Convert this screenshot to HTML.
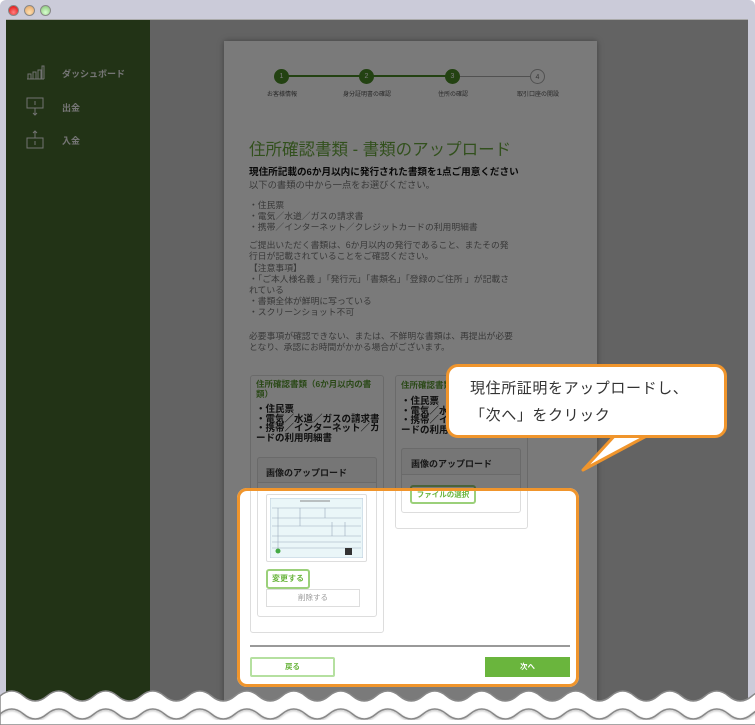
<!DOCTYPE html>
<html><head><meta charset="utf-8">
<style>
*{margin:0;padding:0;box-sizing:border-box}
body{width:755px;height:725px;overflow:hidden;background:#fff;font-family:"Liberation Sans","Noto Sans CJK JP",sans-serif;position:relative}
.frame{position:absolute;left:0;top:0;width:755px;height:725px;background:#cbcbd9;border-radius:6px 6px 0 0}
.dot{position:absolute;top:5px;width:11px;height:11px;border-radius:50%;border:1px solid #888}
.content{position:absolute;left:6px;top:19px;width:742px;height:690px;overflow:hidden;background:#cfcfcf;border-top:1px solid #aaa}
.side{position:absolute;left:0;top:0;width:144px;height:100%;background:#476c2e}
.side .t{position:absolute;left:56px;color:#f4f4f4;font-size:9px;font-weight:bold}
.card{position:absolute;left:218px;top:21px;width:373px;height:700px;background:#fff;box-shadow:0 0 6px rgba(0,0,0,.35)}
.a{position:absolute}
.step{position:absolute;top:28px;width:15px;height:15px;border-radius:50%;background:#4a8a26;color:#fff;font-size:7px;text-align:center;line-height:15px}
.sl{position:absolute;top:48px;font-size:6px;color:#555;width:80px;text-align:center}
.txt{font-size:8.8px;color:#777;line-height:11px}
.spot{position:absolute;left:231px;top:468px;width:342px;height:199px;border:3px solid #f0952c;border-radius:10px;box-shadow:0 0 0 1500px rgba(0,0,0,.52)}
</style></head><body>
<div class="frame">
<div class="dot" style="left:8px;background:radial-gradient(circle at 50% 70%,#ff8080,#d00)"></div>
<div class="dot" style="left:24px;background:radial-gradient(circle at 50% 70%,#ffe0b0,#e0a060)"></div>
<div class="dot" style="left:40px;background:radial-gradient(circle at 50% 70%,#d8ffd0,#80c070)"></div>
</div>
<div class="content">
 <div class="side">
  <svg class="a" style="left:20px;top:44px" width="20" height="16" viewBox="0 0 20 16" fill="none" stroke="#f0f0f0" stroke-width="1"><path d="M1 15h17M2 15v-5h3v5M7 15v-7h3v7M12 15v-9h3v9M16 15V2h2v13"/></svg>
  <div class="t" style="top:47px">ダッシュボード</div>
  <svg class="a" style="left:20px;top:77px" width="20" height="20" viewBox="0 0 20 20" fill="none" stroke="#f0f0f0" stroke-width="1"><rect x="1" y="1" width="16" height="10"/><path d="M9 11v7M7 16l2 2 2-2M9 4v4"/></svg>
  <div class="t" style="top:81px">出金</div>
  <svg class="a" style="left:20px;top:110px" width="20" height="20" viewBox="0 0 20 20" fill="none" stroke="#f0f0f0" stroke-width="1"><rect x="1" y="8" width="16" height="10"/><path d="M9 8V1M7 3l2-2 2 2M9 11v4"/></svg>
  <div class="t" style="top:114px">入金</div>
 </div>
 <div class="card">
  <div class="a" style="left:58px;top:34px;width:170px;height:2px;background:#4a8a26"></div>
  <div class="a" style="left:228px;top:35px;width:86px;height:1px;background:#aaa"></div>
  <div class="step" style="left:50px">1</div>
  <div class="step" style="left:135px">2</div>
  <div class="step" style="left:221px">3</div>
  <div class="step" style="left:306px;background:#fff;border:1px solid #aaa;color:#777">4</div>
  <div class="sl" style="left:18px">お客様情報</div>
  <div class="sl" style="left:103px">身分証明書の確認</div>
  <div class="sl" style="left:189px">住所の確認</div>
  <div class="sl" style="left:274px">取引口座の開設</div>
  <div class="a" style="left:25px;top:95px;font-size:16.5px;color:#6aa83e">住所確認書類 - 書類のアップロード</div>
  <div class="a" style="left:25px;top:123px;font-size:9.6px;font-weight:bold;color:#111">現住所記載の6か月以内に発行された書類を1点ご用意ください</div>
  <div class="a txt" style="left:25px;top:139px;font-size:9.3px">以下の書類の中から一点をお選びください。</div>
  <div class="a txt" style="left:25px;top:159px">・住民票<br>・電気／水道／ガスの請求書<br>・携帯／インターネット／クレジットカードの利用明細書</div>
  <div class="a txt" style="left:25px;top:199px;width:268px">ご提出いただく書類は、6か月以内の発行であること、またその発行日が記載されていることをご確認ください。</div>
  <div class="a txt" style="left:25px;top:222px;width:268px">【注意事項】<br>・「ご本人様名義 」「発行元」「書類名」「登録のご住所 」が記載されている<br>・書類全体が鮮明に写っている<br>・スクリーンショット不可</div>
  <div class="a txt" style="left:25px;top:290px;width:268px">必要事項が確認できない、または、不鮮明な書類は、再提出が必要となり、承認にお時間がかかる場合がございます。</div>
  <!-- left subcard -->
  <div class="a" style="left:26px;top:334px;width:134px;height:258px;border:1px solid #ddd;border-radius:3px"></div>
  <div class="a" style="left:32px;top:338px;width:124px;font-size:8.5px;font-weight:bold;color:#5b9a32;line-height:10px">住所確認書類（6か月以内の書類）</div>
  <div class="a" style="left:32px;top:364px;width:124px;font-size:9.5px;font-weight:bold;color:#222;line-height:9.5px">・住民票<br>・電気／水道／ガスの請求書<br>・携帯／インターネット／カードの利用明細書</div>
  <div class="a" style="left:33px;top:416px;width:120px;height:160px;border:1px solid #ddd;border-radius:3px"></div>
  <div class="a" style="left:33px;top:416px;width:120px;height:26px;background:#f6f6f6;border:1px solid #ddd;border-radius:3px 3px 0 0"></div>
  <div class="a" style="left:42px;top:425px;font-size:9px;font-weight:bold;color:#333">画像のアップロード</div>
  <div class="a" style="left:42px;top:453px;width:101px;height:68px;border:1px solid #ddd;border-radius:2px;padding:3px">
   <svg width="93" height="60" viewBox="0 0 93 60"><rect x="0" y="0" width="93" height="60" fill="#eaf6f8" stroke="#bcd"/><g stroke="#9ab" stroke-width=".6" fill="none"><path d="M2 10h89M2 20h89M2 28h89M2 38h89M2 44h89M2 50h89M30 10v18M55 10v10M62 24v14M75 24v14M8 10v40"/></g><rect x="75" y="50" width="7" height="7" fill="#333"/><circle cx="8" cy="53" r="2.5" fill="#4a4"/><path d="M30 3h30" stroke="#888"/></svg>
  </div>
  <div class="a" style="left:42px;top:528px;width:44px;height:20px;border:2px solid #9bd07a;border-radius:3px;font-size:8px;font-weight:bold;color:#6ab53d;text-align:center;line-height:16px">変更する</div>
  <div class="a" style="left:42px;top:548px;width:94px;height:18px;border:1px solid #ddd;font-size:7.5px;color:#999;text-align:center;line-height:16px">削除する</div>
  <!-- right subcard -->
  <div class="a" style="left:171px;top:334px;width:133px;height:154px;border:1px solid #ddd;border-radius:3px"></div>
  <div class="a" style="left:177px;top:338px;font-size:8.5px;font-weight:bold;color:#5b9a32">住所確認書類</div>
  <div class="a" style="left:177px;top:356px;width:124px;font-size:9.5px;font-weight:bold;color:#222;line-height:9.5px">・住民票<br>・電気／水道／ガスの請求書<br>・携帯／インターネット／カードの利用明細書</div>
  <div class="a" style="left:177px;top:407px;width:120px;height:65px;border:1px solid #ddd;border-radius:3px"></div>
  <div class="a" style="left:177px;top:407px;width:120px;height:27px;background:#f6f6f6;border:1px solid #ddd;border-radius:3px 3px 0 0"></div>
  <div class="a" style="left:187px;top:416px;font-size:9px;font-weight:bold;color:#333">画像のアップロード</div>
  <div class="a" style="left:186px;top:444px;width:66px;height:19px;border:2px solid #9bd07a;border-radius:3px;font-size:7.5px;font-weight:bold;color:#6ab53d;text-align:center;line-height:15px">ファイルの選択</div>
  <!-- footer -->
  <div class="a" style="left:26px;top:604px;width:320px;height:2px;background:#999"></div>
  <div class="a" style="left:26px;top:616px;width:85px;height:20px;border:2px solid #b5e0a0;border-radius:2px;font-size:7.5px;font-weight:bold;color:#6ab53d;text-align:center;line-height:16px">戻る</div>
  <div class="a" style="left:261px;top:616px;width:85px;height:20px;background:#6ab53d;font-size:7.5px;font-weight:bold;color:#fff;text-align:center;line-height:20px">次へ</div>
 </div>
 <div class="spot"></div>
 <svg class="a" style="left:0;top:0" width="742" height="690">
  <path d="M612 412 L577 450 L648 412 Z" fill="#fff" stroke="#f0952c" stroke-width="3" stroke-linejoin="round"/>
 </svg>
 <div class="a" style="left:440px;top:344px;width:281px;height:74px;background:#fff;border:3px solid #f0952c;border-radius:12px"></div>
 <div class="a" style="left:600px;top:410px;width:50px;height:5px;background:#fff"></div>
 <div class="a" style="left:464px;top:355px;font-size:15px;color:#333;line-height:27px;letter-spacing:.6px">現住所証明をアップロードし、<br>「次へ」をクリック</div>
</div>
<svg class="a" style="position:absolute;left:0;top:680px" width="755" height="45" viewBox="0 0 755 45">
 <defs><filter id="s"><feDropShadow dx="0" dy="1" stdDeviation="1" flood-color="#000" flood-opacity=".35"/></filter></defs>
 <path d="M0 16 Q11.75 6 23.5 16 T47 16 T70.5 16 T94 16 T117.5 16 T141 16 T164.5 16 T188 16 T211.5 16 T235 16 T258.5 16 T282 16 T305.5 16 T329 16 T352.5 16 T376 16 T399.5 16 T423 16 T446.5 16 T470 16 T493.5 16 T517 16 T540.5 16 T564 16 T587.5 16 T611 16 T634.5 16 T658 16 T681.5 16 T705 16 T728.5 16 T752 16 T775.5 16 V45 H0Z" fill="#fff" stroke="#888" stroke-width="1.5"/>
 <path d="M0 34 Q11.75 24 23.5 34 T47 34 T70.5 34 T94 34 T117.5 34 T141 34 T164.5 34 T188 34 T211.5 34 T235 34 T258.5 34 T282 34 T305.5 34 T329 34 T352.5 34 T376 34 T399.5 34 T423 34 T446.5 34 T470 34 T493.5 34 T517 34 T540.5 34 T564 34 T587.5 34 T611 34 T634.5 34 T658 34 T681.5 34 T705 34 T728.5 34 T752 34 T775.5 34" fill="none" stroke="#888" stroke-width="1.5" filter="url(#s)"/>
</svg>
</body></html>
